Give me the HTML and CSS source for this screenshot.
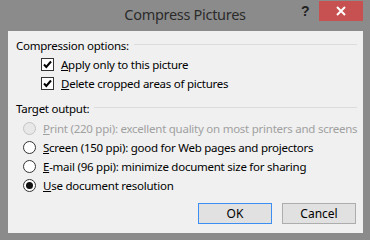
FILE: index.html
```html
<!DOCTYPE html>
<html lang="en">
<head>
    <meta charset="UTF-8">
    <title>Compress Pictures</title>
    <link rel="stylesheet" href="styles.css">
</head>
<body>
    <div class="window">
        <div class="titlebar">
            <div class="title">Compress Pictures</div>
            <div class="help">?</div>
            <div class="close">
                <svg width="10" height="10" viewBox="0 0 10 10">
                    <path d="M1 1 L9 9 M9 1 L1 9" stroke="#fff" stroke-width="2"/>
                </svg>
            </div>
        </div>

        <div class="client">
            <div class="group-header">
                <span>Compression options:</span>
                <div class="rule"></div>
            </div>
            <div class="option check-row">
                <span class="checkbox checked">
                    <svg width="11" height="11" viewBox="0 0 11 11">
                        <path d="M2 5.5 L4.3 8 L9 2.5" fill="none" stroke="#000" stroke-width="2"/>
                    </svg>
                </span>
                <span><u>A</u>pply only to this picture</span>
            </div>
            <div class="option check-row">
                <span class="checkbox checked">
                    <svg width="11" height="11" viewBox="0 0 11 11">
                        <path d="M2 5.5 L4.3 8 L9 2.5" fill="none" stroke="#000" stroke-width="2"/>
                    </svg>
                </span>
                <span><u>D</u>elete cropped areas of pictures</span>
            </div>

            <div class="group-header target">
                <span>Target output:</span>
                <div class="rule"></div>
            </div>
            <div class="radios">
                <div class="option radio-row disabled">
                    <span class="radio"></span>
                    <span><u>P</u>rint (220 ppi): excellent quality on most printers and screens</span>
                </div>
                <div class="option radio-row">
                    <span class="radio"></span>
                    <span><u>S</u>creen (150 ppi): good for Web pages and projectors</span>
                </div>
                <div class="option radio-row">
                    <span class="radio"></span>
                    <span><u>E</u>-mail (96 ppi): minimize document size for sharing</span>
                </div>
                <div class="option radio-row">
                    <span class="radio selected"></span>
                    <span><u>U</u>se document resolution</span>
                </div>
            </div>

            <div class="buttons">
                <button class="btn default">OK</button>
                <button class="btn">Cancel</button>
            </div>
        </div>
    </div>
</body>
</html>
```

FILE: styles.css
```css
* {
    box-sizing: border-box;
    margin: 0;
    padding: 0;
}

body {
    width: 370px;
    height: 240px;
    background-color: #8b8b8b;
    font-family: 'Noto Sans', 'Liberation Sans', sans-serif;
    font-size: 11.5px;
    letter-spacing: -0.25px;
    color: #000;
    overflow: hidden;
}

.window {
    display: flex;
    flex-direction: column;
    height: 240px;
}

/* barra del titolo */
.titlebar {
    position: relative;
    height: 31px;
}

.title {
    text-align: center;
    font-size: 14.5px;
    letter-spacing: -0.3px;
    line-height: 28px;
    color: #2b2b2b;
}

.help {
    position: absolute;
    left: 301px;
    top: 3px;
    font-family: 'Liberation Sans', sans-serif;
    font-weight: bold;
    font-size: 14px;
    color: #222;
}

.close {
    position: absolute;
    left: 319px;
    top: 1px;
    width: 44px;
    height: 20px;
    background-color: #c75050;
    display: flex;
    justify-content: center;
    align-items: center;
}

/* area client */
.client {
    flex: 1;
    margin: 0 7px 7px 8px;
    background-color: #f0f0f0;
    padding: 5px 6px 0 8px;
    display: flex;
    flex-direction: column;
}

.group-header {
    display: flex;
    align-items: center;
    height: 19px;
    gap: 5px;
}

.group-header.target {
    margin-top: 6px;
}

.rule {
    flex: 1;
    height: 1px;
    background-color: #dcdcdc;
    margin-top: -2px;
}

.option {
    display: flex;
    align-items: center;
    height: 19px;
    white-space: nowrap;
}

.check-row {
    padding-left: 25px;
    gap: 7px;
}

.checkbox {
    flex-shrink: 0;
    width: 13px;
    height: 13px;
    border: 1px solid #333;
    background-color: #fff;
    display: flex;
    justify-content: center;
    align-items: center;
}

.radios {
    margin-top: 1px;
}

.radio-row {
    padding-left: 7px;
    gap: 7px;
}

.radio {
    flex-shrink: 0;
    width: 13px;
    height: 13px;
    border: 1px solid #333;
    border-radius: 50%;
    background-color: #fff;
    display: flex;
    justify-content: center;
    align-items: center;
}

.radio.selected::after {
    content: '';
    width: 7px;
    height: 7px;
    border-radius: 50%;
    background-color: #111;
}

.disabled {
    color: #a0a0a0;
}

.disabled .radio {
    border-color: #c4c4c4;
    background-color: #e8e8e8;
}

.buttons {
    display: flex;
    justify-content: flex-end;
    gap: 10px;
    margin-top: 8px;
    padding-right: 1px;
}

.btn {
    width: 74px;
    height: 21px;
    font-family: inherit;
    font-size: 12px;
    letter-spacing: 0;
    color: #000;
    background-color: #e1e1e1;
    border: 1px solid #adadad;
}

.btn.default {
    border-color: #3c8ff0;
}
```
